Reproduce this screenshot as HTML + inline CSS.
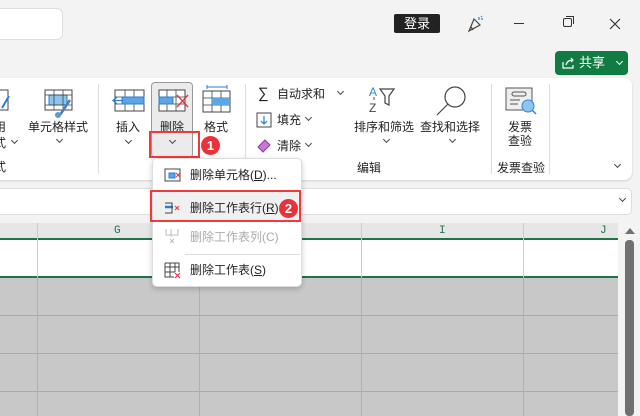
<!DOCTYPE html>
<html><head><meta charset="utf-8">
<style>
*{margin:0;padding:0;box-sizing:border-box}
body{width:640px;height:416px;overflow:hidden;background:#f3f3f3;font-family:"Liberation Sans","Noto Sans CJK SC",sans-serif;font-size:12px;color:#222;position:relative}
.a{position:absolute}
.t{position:absolute;white-space:nowrap;font-size:12px;line-height:14px}
.chev{position:absolute;width:5px;height:5px;border-right:1.2px solid #444;border-bottom:1.2px solid #444;transform:rotate(45deg)}
.badge{position:absolute;width:19px;height:19px;border-radius:50%;background:#e8323a;color:#fff;font-size:13px;font-weight:bold;text-align:center;line-height:19px}
</style></head><body>
<!-- top -->
<div class="a" style="left:-10px;top:8px;width:73px;height:32px;background:#fff;border:1px solid #ddd;border-radius:6px"></div>
<div class="a" style="left:394px;top:14px;width:46px;height:19px;background:#222;border-radius:2px;color:#fff;text-align:center;line-height:19px;font-size:13px">登录</div>
<svg class="a" style="left:465px;top:14px" width="20" height="20"><path d="M4 17 L9 5 L15 11 Z M6 13 L8 16" fill="none" stroke="#444" stroke-width="1.2"/><path d="M14 3v3M16 5h2M17 2l-1 1" stroke="#2b88d8" stroke-width="1.2"/></svg>
<div class="a" style="left:514px;top:23px;width:10px;height:1px;background:#333"></div>
<div class="a" style="left:563px;top:18px;width:9px;height:9px;border:1.2px solid #333;border-radius:2px"></div>
<div class="a" style="left:566px;top:16px;width:8px;height:8px;border-top:1.2px solid #333;border-right:1.2px solid #333"></div>
<svg class="a" style="left:609px;top:18px" width="12" height="12"><path d="M1 1L11 11M11 1L1 11" stroke="#333" stroke-width="1.2"/></svg>
<div class="a" style="left:555px;top:51px;width:73px;height:24px;background:#107c41;border-radius:4px;color:#fff;font-size:13px;line-height:24px;padding-left:24px">共享</div>
<svg class="a" style="left:561px;top:56px" width="14" height="14"><path d="M2 6v6h10V9M5 9c1-4 4-5 7-5M10 2l2 2-2 2" fill="none" stroke="#fff" stroke-width="1.2"/></svg>
<div class="chev" style="left:617px;top:59px;border-color:#fff"></div>

<!-- ribbon -->
<div class="a" style="left:-10px;top:78px;width:642px;height:102px;background:#fff;border-radius:8px;box-shadow:0 1px 2px rgba(0,0,0,.15)"></div>
<div class="a" style="left:98px;top:84px;width:1px;height:90px;background:#ddd"></div>
<div class="a" style="left:245px;top:84px;width:1px;height:90px;background:#ddd"></div>
<div class="a" style="left:491px;top:84px;width:1px;height:90px;background:#ddd"></div>
<div class="a" style="left:549px;top:84px;width:1px;height:90px;background:#ddd"></div>
<!-- left cut -->
<svg class="a" style="left:0;top:88px" width="10" height="24"><rect x="-10" y="2" width="18" height="20" fill="#fff" stroke="#444"/><path d="M2 20L9 8" stroke="#2b7cd3" stroke-width="2"/></svg>
<div class="t" style="left:-6px;top:120px">用</div>
<div class="t" style="left:-6px;top:136px">式</div><div class="chev" style="left:12px;top:138px"></div>
<div class="t" style="left:-6px;top:160px">式</div>
<!-- 单元格样式 -->
<svg class="a" style="left:44px;top:88px" width="32" height="30"><rect x="1" y="2" width="27" height="20" fill="#fff" stroke="#444"/><rect x="5" y="7" width="18" height="10" fill="#8cc4ee" stroke="#2b7cd3"/><path d="M1 7h27M1 17h27M10 2v20M19 2v20" stroke="#444" stroke-width=".8"/><path d="M16 27L26 12" stroke="#4a7fb8" stroke-width="2.5"/><circle cx="14" cy="27" r="3" fill="#5b9bd5"/></svg>
<div class="t" style="left:28px;top:120px">单元格样式</div>
<div class="chev" style="left:57px;top:137px"></div>
<!-- 插入 -->
<svg class="a" style="left:112px;top:88px" width="34" height="26"><rect x="3" y="2" width="29" height="21" fill="#fff" stroke="#444"/><path d="M3 9h29M3 16h29M13 2v21M22 2v21" stroke="#444" stroke-width=".8"/><rect x="10" y="9" width="22" height="7" fill="#5ba6e3" stroke="#2b7cd3"/><path d="M1 12.5h10M5 9l-4 3.5 4 3.5" fill="none" stroke="#2b7cd3" stroke-width="1.3"/></svg>
<div class="t" style="left:116px;top:120px">插入</div>
<div class="chev" style="left:126px;top:138px"></div>
<!-- 删除 -->
<div class="a" style="left:151px;top:82px;width:42px;height:76px;background:#ebebeb;border:1px solid #999;border-radius:4px"></div>
<svg class="a" style="left:157px;top:88px" width="34" height="26"><rect x="2" y="2" width="26" height="21" fill="#fff" stroke="#444"/><path d="M2 9h26M2 16h26M10 2v21M19 2v21" stroke="#444" stroke-width=".8"/><rect x="2" y="9" width="14" height="7" fill="#5ba6e3" stroke="#2b7cd3"/><path d="M20 7L31 19M31 7L20 19" stroke="#e8323a" stroke-width="1.3"/></svg>
<div class="t" style="left:160px;top:120px">删除</div>
<div class="chev" style="left:170px;top:138px"></div>
<div class="a" style="left:149px;top:131px;width:51px;height:27px;border:2px solid #ee3a3a"></div>
<div class="badge" style="left:201px;top:136px">1</div>
<!-- 格式 -->
<svg class="a" style="left:200px;top:84px" width="32" height="30"><path d="M7 3h20M7 1v4M27 1v4" stroke="#2b7cd3"/><rect x="3" y="7" width="27" height="21" fill="#fff" stroke="#444"/><path d="M3 14h27M3 21h27M12 7v21M21 7v21" stroke="#444" stroke-width=".8"/><rect x="12" y="14" width="18" height="7" fill="#5ba6e3"/></svg>
<div class="t" style="left:204px;top:120px">格式</div>
<!-- 编辑 -->
<div class="t" style="left:258px;top:87px;font-size:15px">∑</div>
<div class="t" style="left:277px;top:87px">自动求和</div><div class="chev" style="left:338px;top:89px"></div>
<svg class="a" style="left:256px;top:112px" width="16" height="16"><rect x="1" y="1" width="14" height="14" fill="none" stroke="#444"/><path d="M8 4v8M5 9l3 3 3-3" fill="none" stroke="#2b7cd3" stroke-width="1.2"/></svg>
<div class="t" style="left:277px;top:113px">填充</div><div class="chev" style="left:306px;top:115px"></div>
<svg class="a" style="left:256px;top:138px" width="16" height="16"><path d="M2 9L9 2l5 5-7 7z" fill="#c679d6" stroke="#8a3aa5"/></svg>
<div class="t" style="left:277px;top:139px">清除</div><div class="chev" style="left:306px;top:141px"></div>
<svg class="a" style="left:368px;top:84px" width="34" height="30"><text x="1" y="12" font-size="12" fill="#2b88d8" font-family="Liberation Sans">A</text><text x="1" y="28" font-size="12" fill="#444" font-family="Liberation Sans">Z</text><path d="M6 13v3" stroke="#444"/><path d="M12 5h14l-5 7v9l-4-2v-7z" fill="none" stroke="#444" stroke-width="1.2"/></svg>
<div class="t" style="left:354px;top:120px">排序和筛选</div><div class="chev" style="left:384px;top:137px"></div>
<svg class="a" style="left:434px;top:84px" width="34" height="34"><circle cx="21" cy="13" r="10" fill="#fff" stroke="#444" stroke-width="1.2"/><path d="M14 20L3 31" stroke="#444" stroke-width="1.2"/></svg>
<div class="t" style="left:420px;top:120px">查找和选择</div><div class="chev" style="left:450px;top:137px"></div>
<div class="t" style="left:357px;top:161px">编辑</div>
<!-- 发票 -->
<svg class="a" style="left:505px;top:86px" width="34" height="30"><rect x="1" y="2" width="26" height="22" fill="#eee" stroke="#555"/><rect x="7" y="6" width="14" height="4" rx="2" fill="none" stroke="#555"/><path d="M5 14h10M5 18h8" stroke="#555"/><circle cx="23" cy="20" r="6" fill="#8ec4f0" stroke="#2b88d8"/><path d="M27 24l4 4" stroke="#2b88d8" stroke-width="1.5"/></svg>
<div class="t" style="left:508px;top:120px">发票</div>
<div class="t" style="left:508px;top:134px">查验</div>
<div class="t" style="left:497px;top:161px">发票查验</div>
<div class="chev" style="left:615px;top:162px"></div>

<!-- formula bar -->
<div class="a" style="left:-10px;top:188px;width:642px;height:27px;background:#fff;border:1px solid #ddd;border-radius:5px"></div>
<div class="chev" style="left:620px;top:196px"></div>

<!-- grid -->
<div class="a" style="left:0;top:223px;width:618px;height:16px;background:#e6e6e6"></div>
<div class="a" style="left:0;top:240px;width:618px;height:37px;background:#fff"></div>
<div class="a" style="left:0;top:277px;width:618px;height:139px;background:#c8c8c8"></div>
<div class="a" style="left:0;top:238px;width:618px;height:2px;background:#217346"></div>
<div class="a" style="left:0;top:276px;width:618px;height:2px;background:#217346"></div>
<div class="a" style="left:0;top:315px;width:618px;height:1px;background:#aaa"></div>
<div class="a" style="left:0;top:353px;width:618px;height:1px;background:#aaa"></div>
<div class="a" style="left:0;top:391px;width:618px;height:1px;background:#aaa"></div>
<div class="a" style="left:37px;top:223px;width:1px;height:193px;background:#ccc"></div>
<div class="a" style="left:199px;top:223px;width:1px;height:193px;background:#ccc"></div>
<div class="a" style="left:361px;top:223px;width:1px;height:193px;background:#ccc"></div>
<div class="a" style="left:523px;top:223px;width:1px;height:193px;background:#ccc"></div>
<div class="a" style="left:0;top:277px;width:618px;height:139px;background:linear-gradient(90deg,transparent 37px,#b0b0b0 37px,#b0b0b0 38px,transparent 38px,transparent 199px,#b0b0b0 199px,#b0b0b0 200px,transparent 200px,transparent 361px,#b0b0b0 361px,#b0b0b0 362px,transparent 362px,transparent 523px,#b0b0b0 523px,#b0b0b0 524px,transparent 524px)"></div>
<div class="t" style="left:114px;top:225px;font-size:11px;line-height:12px;color:#217346;font-family:'Liberation Mono',monospace">G</div>
<div class="t" style="left:439px;top:225px;font-size:11px;line-height:12px;color:#217346;font-family:'Liberation Mono',monospace">I</div>
<div class="t" style="left:600px;top:225px;font-size:11px;line-height:12px;color:#217346;font-family:'Liberation Mono',monospace">J</div>
<!-- scrollbar -->
<div class="a" style="left:620px;top:223px;width:20px;height:193px;background:#f3f3f3"></div>
<div class="a" style="left:625px;top:240px;width:9px;height:176px;background:#707070;border-radius:4px"></div>
<div class="a" style="left:625px;top:228px;width:0;height:0;border-left:5px solid transparent;border-right:5px solid transparent;border-bottom:6px solid #707070"></div>

<!-- menu -->
<div class="a" style="left:152px;top:158px;width:150px;height:129px;background:#fff;border:1px solid #ddd;border-radius:5px;box-shadow:0 2px 6px rgba(0,0,0,.2)"></div>
<svg class="a" style="left:164px;top:167px" width="18" height="16"><rect x="1" y="2" width="15" height="12" fill="none" stroke="#444"/><rect x="5" y="6" width="6" height="5" fill="#5ba6e3" stroke="#2b7cd3"/><path d="M12 6l4 4M16 6l-4 4" stroke="#e8323a"/></svg>
<div class="t" style="left:190px;top:168px">删除单元格(<u>D</u>)...</div>
<div class="a" style="left:153px;top:192px;width:147px;height:29px;background:#f0f0f0"></div>
<svg class="a" style="left:164px;top:200px" width="18" height="16"><path d="M1 7h8" stroke="#2b7cd3" stroke-width="2.5"/><path d="M1 3h7v10H1" fill="none" stroke="#444"/><path d="M11 6l4 4M15 6l-4 4" stroke="#e8323a"/></svg>
<div class="t" style="left:190px;top:201px">删除工作表行(<u>R</u>)</div>
<div class="a" style="left:150px;top:190px;width:151px;height:32px;border:2px solid #ee3a3a"></div>
<div class="badge" style="left:279px;top:199px">2</div>
<svg class="a" style="left:164px;top:228px" width="18" height="18" opacity=".35"><path d="M2 1v6h12V1M7 1v8" fill="none" stroke="#444"/><path d="M6 11l4 4M10 11l-4 4" stroke="#444"/></svg>
<div class="t" style="left:190px;top:230px;color:#aaa">删除工作表列(C)</div>
<div class="a" style="left:185px;top:254px;width:115px;height:1px;background:#ddd"></div>
<svg class="a" style="left:164px;top:262px" width="18" height="18"><path d="M1 1h14v9M1 1v14h9M1 5h14M1 10h10M6 1v14M11 1v9" fill="none" stroke="#444"/><path d="M11 11l5 5M16 11l-5 5" stroke="#e8323a" stroke-width="1.2"/></svg>
<div class="t" style="left:190px;top:263px">删除工作表(<u>S</u>)</div>
</body></html>
